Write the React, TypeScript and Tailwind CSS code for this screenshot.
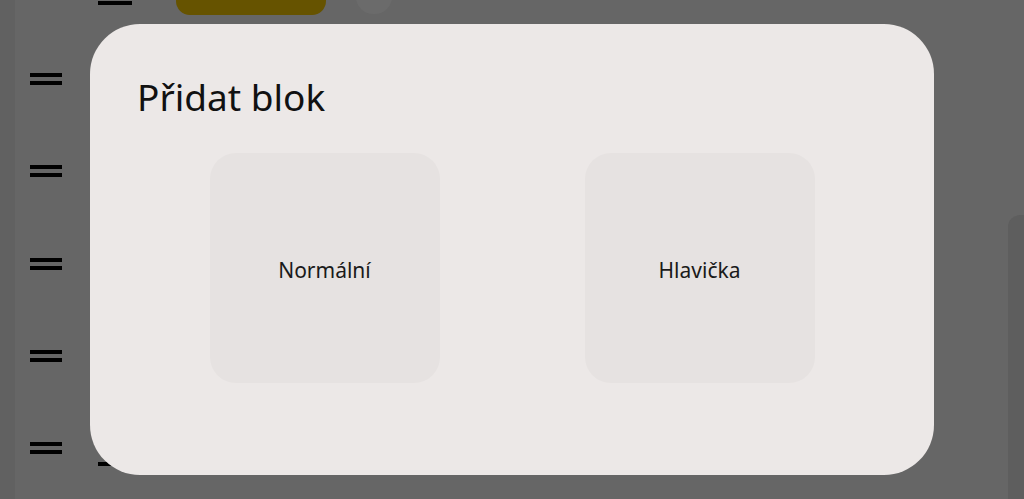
import { useState } from 'react';

const BLOCK_TYPES = ['Normální', 'Hlavička'];

function DragHandle() {
  return (
    <div className="flex w-[32px] flex-col gap-[4px]">
      <div className="h-[4px] w-full bg-black" />
      <div className="h-[4px] w-full bg-black" />
    </div>
  );
}

export default function App() {
  const [selected, setSelected] = useState<string | null>(null);

  return (
    <div
      className="relative h-[499px] w-[1024px] overflow-hidden bg-[#666666]"
      style={{ fontFamily: '"Noto Sans", "Open Sans", sans-serif' }}
    >
      {/* Dimmed page underneath */}
      <div className="flex h-full">
        <div className="h-full w-[15px] bg-[#616161]" />
        <div className="relative flex-1">
          {/* top row, mostly scrolled off */}
          <div className="flex h-[15px] items-start">
            <div className="ml-[83px] mt-[1px] h-[4px] w-[34px] bg-black" />
            <div className="ml-[44px] h-[15px] w-[150px] rounded-b-[14px] bg-[#665300]" />
            <div className="ml-[30px] -mt-[20px] h-[34px] w-[36px] rounded-full bg-[#6b6b6b]" />
          </div>
          <div className="flex flex-col pt-[2px]">
            {[0, 1, 2, 3, 4].map((i) => (
              <div key={i} className="flex h-[92.3px] items-center pl-[15px] pt-[32px]">
                <DragHandle />
              </div>
            ))}
          </div>
          <div className="absolute left-[83px] top-[462px] h-[4px] w-[20px] bg-black" />
          <div className="absolute right-0 top-[215px] h-[300px] w-[16px] rounded-tl-[12px] bg-[#5e5e5e]" />
        </div>
      </div>

      {/* Dialog */}
      <div className="absolute inset-0 flex items-center justify-center">
        <div className="h-[451px] w-[844px] rounded-[50px] bg-[#ece8e7] px-[47px] pt-[54px]">
          <h2 className="text-[37px] leading-[37px] text-[#111111]">Přidat blok</h2>
          <div className="mt-[38px] grid grid-cols-2">
            {BLOCK_TYPES.map((type) => (
              <div key={type} className="flex justify-center">
                <button
                  onClick={() => setSelected(type)}
                  className={`flex h-[230px] w-[230px] items-center justify-center rounded-[26px] pt-[5px] text-[21px] text-[#1a1a1a] ${
                    selected === type ? 'bg-[#dcd8d7]' : 'bg-[#e6e2e1]'
                  }`}
                >
                  {type}
                </button>
              </div>
            ))}
          </div>
        </div>
      </div>
    </div>
  );
}
